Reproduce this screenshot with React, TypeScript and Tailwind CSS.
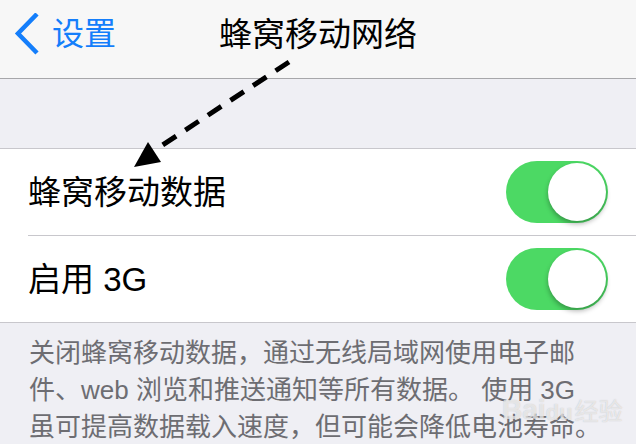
import React from 'react';

const CJK = "font-['Liberation_Sans','Noto_Sans_CJK_SC',sans-serif]";

const Toggle: React.FC = () => (
  <div className="relative w-[102px] h-[62px] rounded-full bg-[#4cd964] shrink-0">
    <div className="absolute right-[2px] top-[2px] w-[58px] h-[58px] rounded-full bg-white shadow-[0_3px_5px_rgba(0,0,0,0.3)]" />
  </div>
);

const App: React.FC = () => {
  return (
    <div className={`relative w-[636px] h-[444px] overflow-hidden bg-[#efeff4] ${CJK}`}>
      {/* Nav bar */}
      <div className="h-[79px] bg-[#f7f7f7] border-b border-[#a7a7aa] grid grid-cols-[1fr_auto_1fr] items-center pb-[10px]">
        <div className="flex items-center pl-[14px] text-[#147efb]">
          <svg width="28" height="42" viewBox="0 0 28 42" className="shrink-0">
            <path d="M23 1 L4 20.5 L23 40" fill="none" stroke="#147efb" strokeWidth="4.5" strokeLinecap="butt" strokeLinejoin="miter" />
          </svg>
          <span className="ml-[10px] text-[32px] leading-none">设置</span>
        </div>
        <div className="text-[33px] leading-none text-black">蜂窝移动网络</div>
        <div />
      </div>

      {/* Spacer */}
      <div className="h-[69px]" />

      {/* Group */}
      <div className="bg-white border-y border-[#c8c7cc]">
        <div className="pl-[28px]">
          <div className="h-[86px] flex items-center justify-between pr-[28px]">
            <span className="text-[33px] leading-none text-black">蜂窝移动数据</span>
            <Toggle />
          </div>
          <div className="h-[87px] border-t border-[#c8c7cc] flex items-center justify-between pr-[28px]">
            <span className="text-[33px] leading-none text-black">启用 3G</span>
            <Toggle />
          </div>
        </div>
      </div>

      {/* Footer note */}
      <div className="pt-[12px] pl-[29px] text-[26px] leading-[37px] text-[#6d6d72] whitespace-nowrap">
        <div>关闭蜂窝移动数据，通过无线局域网使用电子邮</div>
        <div>件、web 浏览和推送通知等所有数据。 使用 3G</div>
        <div>虽可提高数据载入速度，但可能会降低电池寿命。</div>
      </div>

      {/* Watermark */}
      <div className="absolute left-[502px] top-[396px] flex items-end text-white/60 [text-shadow:0_0_1px_rgba(140,140,140,0.5)]">
        <span className="text-[28px] leading-none font-bold">Bai</span>
        <span className="text-[22px] leading-none font-bold">du</span>
        <span className="ml-[2px] text-[24px] leading-none">经验</span>
      </div>

      {/* Annotation arrow */}
      <svg className="absolute inset-0 pointer-events-none" width="636" height="444" viewBox="0 0 636 444">
        <line x1="289" y1="62" x2="158" y2="148" stroke="#000" strokeWidth="5" strokeDasharray="16 11" />
        <polygon points="134,167 148,142 161,162" fill="#000" />
      </svg>
    </div>
  );
};

export default App;
